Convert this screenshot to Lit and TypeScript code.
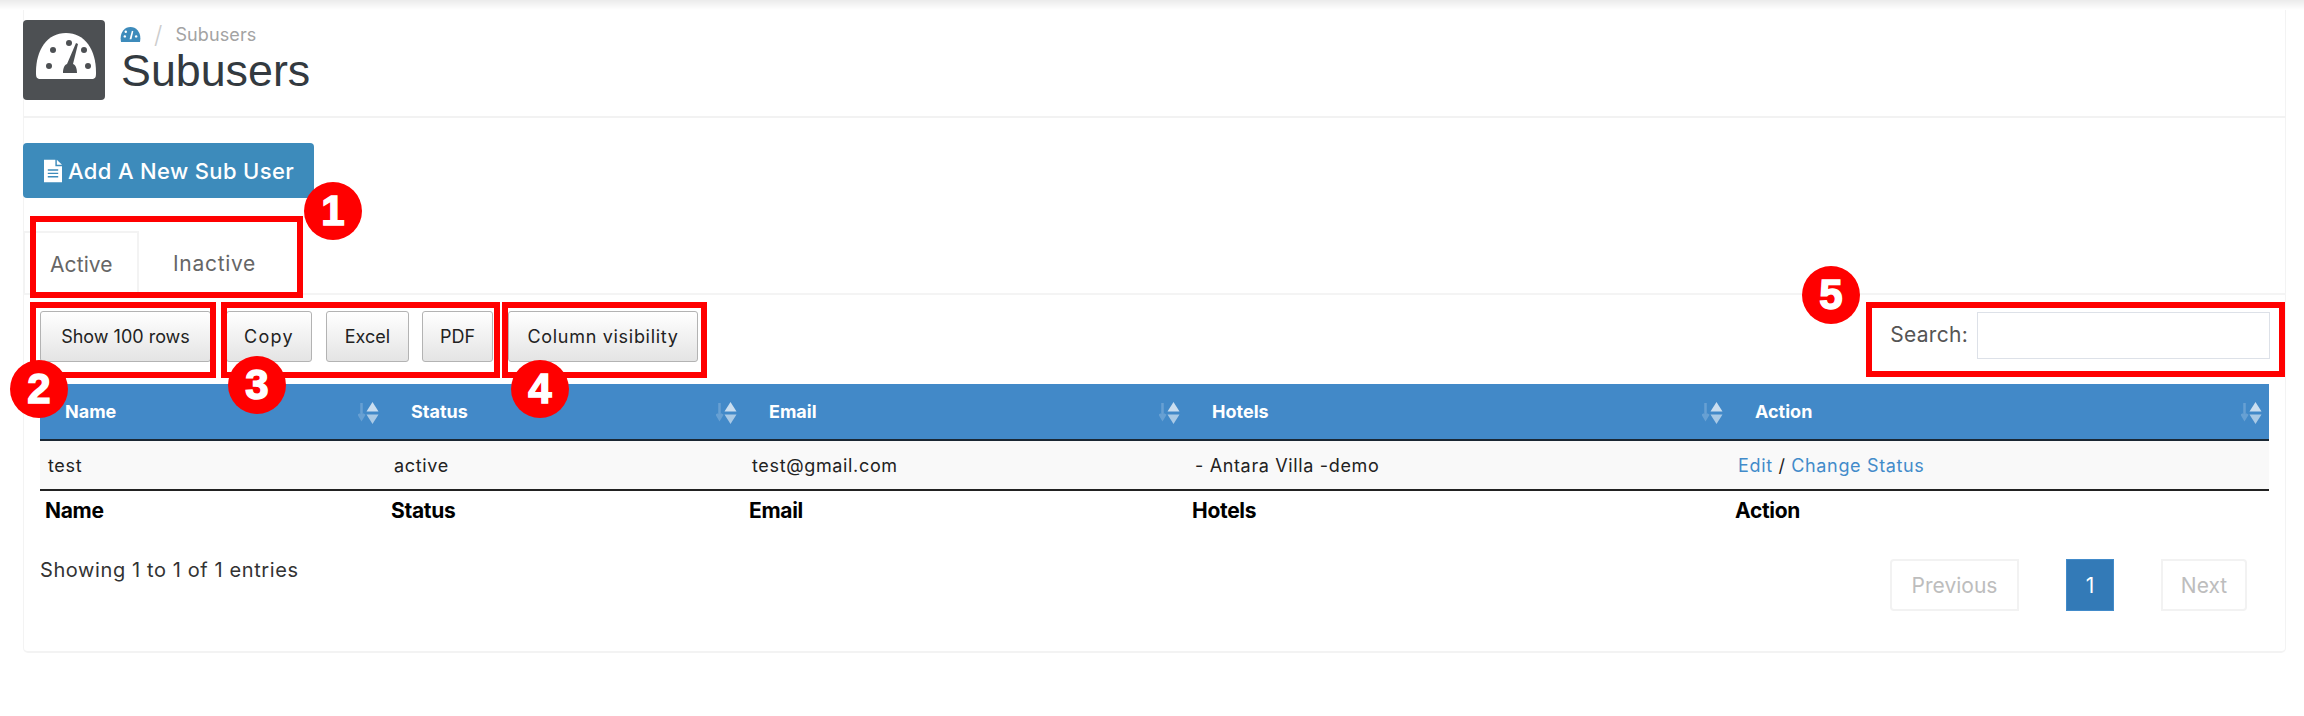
import { LitElement, html, css } from "lit";
import { customElement } from "lit/decorators.js";

const sortIcon = html`<svg class="sort" viewBox="0 0 22 24" aria-hidden="true">
  <path d="M3.500 2v15M.5 13l3 5 3-5" fill="none" stroke="#fff" stroke-opacity=".2" stroke-width="2.500"/>
  <path d="M14.500 1l6 9.500h-12z" fill="#fff" fill-opacity=".72"/>
  <path d="M14.500 23l6-9.500h-12z" fill="#fff" fill-opacity=".55"/>
</svg>`;

@customElement("app-root")
export class AppRoot extends LitElement {
  static styles = css`
    :host { display: block; height: 716px; overflow: hidden; background: #fff; font-family: Inter, "Liberation Sans", sans-serif; color: #333; }
    .shadow { height: 10px; background: linear-gradient(#ebebeb, #fff); }
    .card { position: relative; margin: 0 18px 0 23px; height: 643px; box-sizing: border-box; padding-top: 10px; border: solid #f3f3f3; border-width: 0 1px 2px 1px; border-radius: 0 0 5px 5px; }
    .head { display: flex; gap: 17px; height: 96px; border-bottom: 2px solid #f2f2f2; margin-left: -1px; margin-right: -1px; }
    .logo { width: 82px; height: 80px; background: #4d5053; border-radius: 4px; flex: none; display: block; }
    .crumb { display: flex; align-items: center; height: 28px; font-size: 18px; color: #a3a3a3; letter-spacing: .1px; margin-left: -2px; }
    .crumb svg { width: 21px; height: 17px; display: block; }
    .crumb .sep { font-size: 24px; font-weight: 300; color: #ccc; margin: 0 13px; }
    h1 { margin: 0; font: 400 44.8px/45px "Liberation Sans", Arial, sans-serif; color: #333a40; margin-left: -1px; }
    .add { display: flex; align-items: center; gap: 6px; box-sizing: border-box; margin: 25px 0 0 -1px; width: 291px; height: 55px; padding-left: 21px; background: #3d8bbb; border: 0; border-radius: 4px; color: #fff; font: 500 22px Inter, sans-serif; letter-spacing: .35px; }
    .add svg { width: 18px; height: 24px; flex: none; }
    .tabs { display: flex; height: 62px; margin-top: 33px; border-bottom: 2px solid #f4f4f4; margin-left: -1px; margin-right: -1px; }
    .tab { display: flex; align-items: center; font-size: 21px; color: #666; padding-top: 3px; box-sizing: border-box; }
    .tab.on { width: 116px; padding-left: 25px; border: solid #f3f3f3; border-width: 2px 2px 0 2px; letter-spacing: .1px; }
    .tab.off { padding-left: 34px; letter-spacing: .7px; }
    .tools { display: flex; align-items: flex-start; margin: 16px 15px 0 16px; height: 73px; }
    .btn { box-sizing: border-box; height: 51px; border: 1px solid #b3b3b3; border-radius: 3px; background: linear-gradient(#fff, #e4e4e4); color: #222; font: 400 18px Inter, sans-serif; padding: 0; }
    .b-show { width: 171px; margin-right: 15px; }
    .b-copy { width: 86px; margin-right: 14px; letter-spacing: 1.300px; }
    .b-excel { width: 83px; margin-right: 13px; }
    .b-pdf { width: 71px; margin-right: 15px; }
    .b-col { width: 190px; letter-spacing: .7px; }
    .search { margin-left: auto; margin-top: 1px; display: flex; align-items: flex-start; gap: 9px; font-size: 21px; color: #555; letter-spacing: .3px; }
    .search span { line-height: 46px; }
    .search .input { display: block; width: 293px; height: 47px; box-sizing: border-box; border: 1.500px solid #dde1e8; background: #fff; }
    table { border-collapse: collapse; table-layout: fixed; width: 2229px; margin-left: 16px; }
    th.h { height: 55px; background: #4289c8; color: #fff; font-size: 18px; font-weight: 700; text-align: left; padding: 0 0 0 25px; position: relative; border-bottom: 2px solid #1a2733; }
    .sort { position: absolute; right: 6px; top: 17px; width: 22px; height: 24px; }
    td { height: 48px; background: #f9f9f9; font-size: 18px; color: #222; padding: 0 0 0 8px; border-bottom: 2px solid #222; letter-spacing: .65px; }
    td a { color: #428bca; }
    tfoot th { height: 38px; text-align: left; font-size: 21px; font-weight: 700; color: #000; padding: 0 0 0 5px; letter-spacing: -.3px; }
    .foot { display: flex; margin: 22px 0 0 16px; }
    .info { font-size: 20px; color: #333; letter-spacing: .6px; padding-top: 7px; }
    .pager { margin-left: auto; margin-right: 38px; margin-top: 8px; display: flex; gap: 47px; font-size: 21px; color: #bdbdbd; }
    .pg { box-sizing: border-box; height: 52px; display: flex; align-items: center; justify-content: center; border: 2px solid #f2f2f2; }
    .prev { width: 129px; border-radius: 4px 0 0 4px; }
    .next { width: 86px; border-radius: 0 4px 4px 0; }
    .cur { width: 48px; background: #337ab7; border-color: #428bca; border-width: 1px; color: #fff; }
    .box { position: absolute; box-sizing: border-box; border: 6px solid #f00; }
    .dot { position: absolute; width: 58px; height: 58px; border-radius: 50%; background: #f00; color: #fff; font: 700 42px/58px "Liberation Sans", Arial, sans-serif; text-align: center; -webkit-text-stroke: 1.500px #fff; }
    .b1 { left: 6px; top: 206px; width: 273px; height: 82px; }
    .b2 { left: 6px; top: 292px; width: 186px; height: 76px; }
    .b3 { left: 197px; top: 292px; width: 279px; height: 76px; }
    .b4 { left: 478px; top: 292px; width: 205px; height: 76px; }
    .b5 { left: 1842px; top: 292px; width: 419px; height: 75px; }
    .d1 { left: 280px; top: 172px; }
    .d2 { left: -14px; top: 350px; }
    .d3 { left: 204px; top: 346px; }
    .d4 { left: 487px; top: 350px; }
    .d5 { left: 1778px; top: 256px; }
  `;

  render() {
    const cols = ["Name", "Status", "Email", "Hotels", "Action"];
    const widths = [346, 358, 443, 543, 539];
    return html`
      <div class="shadow"></div>
      <div class="card">
        <div class="head">
          <svg class="logo" viewBox="0 0 82 80" aria-hidden="true">
            <path d="M19 59c-3-1-3-3-3-7 0-22 11-39 30-39s30 17 30 39c0 4 0 6-3 7z" fill="#fff" transform="translate(-3 0)"/>
            <g fill="#4d5053">
              <circle cx="30" cy="30" r="3"/><circle cx="46" cy="23" r="3"/><circle cx="61" cy="30" r="3"/>
              <circle cx="26" cy="46" r="3"/><circle cx="65" cy="46" r="3"/>
              <path d="M44 44l9-21 2 1-5 20c3 1 4 5 4 9H40c0-4 1-8 4-9z"/>
            </g>
          </svg>
          <div>
            <div class="crumb">
              <svg viewBox="0 0 22 18" aria-hidden="true">
                <path d="M1 17C-1 8 4 1 11 1s12 7 10 16z" fill="#3d8bbb"/>
                <g fill="#fff"><circle cx="5" cy="11" r="1.300"/><circle cx="6" cy="6" r="1.300"/><circle cx="17" cy="11" r="1.300"/><path d="M10 14l2.500-9 1.500.5-2 8.500z"/></g>
              </svg>
              <span class="sep">/</span><span>Subusers</span>
            </div>
            <h1>Subusers</h1>
          </div>
        </div>
        <button class="add">
          <svg viewBox="0 0 19 24" aria-hidden="true"><path d="M0 0h12v7h7v17H0z" fill="#fff"/><path d="M13.500 0L19 5.500h-5.500z" fill="#fff"/><path d="M4 11h11M4 14.500h11M4 18h11" stroke="#3d8bbb" stroke-width="1.500"/></svg>
          Add A New Sub User
        </button>
        <div class="tabs"><div class="tab on">Active</div><div class="tab off">Inactive</div></div>
        <div class="tools">
          <button class="btn b-show">Show 100 rows</button>
          <button class="btn b-copy">Copy</button>
          <button class="btn b-excel">Excel</button>
          <button class="btn b-pdf">PDF</button>
          <button class="btn b-col">Column visibility</button>
          <label class="search"><span>Search:</span><span class="input"></span></label>
        </div>
        <table>
          <colgroup>${widths.map((w) => html`<col style="width:${w}px" />`)}</colgroup>
          <thead><tr>${cols.map((c) => html`<th class="h">${c}${sortIcon}</th>`)}</tr></thead>
          <tbody><tr>
            <td>test</td><td>active</td><td>test@gmail.com</td><td>- Antara Villa -demo</td>
            <td><a>Edit</a> / <a>Change Status</a></td>
          </tr></tbody>
          <tfoot><tr>${cols.map((c) => html`<th>${c}</th>`)}</tr></tfoot>
        </table>
        <div class="foot">
          <div class="info">Showing 1 to 1 of 1 entries</div>
          <div class="pager"><div class="pg prev">Previous</div><div class="pg cur">1</div><div class="pg next">Next</div></div>
        </div>
        <div class="box b1"></div><div class="box b2"></div><div class="box b3"></div><div class="box b4"></div><div class="box b5"></div>
        <div class="dot d1">1</div><div class="dot d2">2</div><div class="dot d3">3</div><div class="dot d4">4</div><div class="dot d5">5</div>
      </div>
    `;
  }
}
